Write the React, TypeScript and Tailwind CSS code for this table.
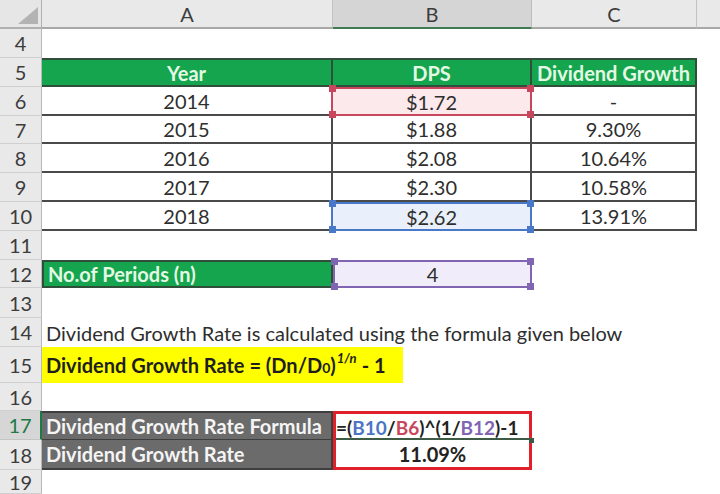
import React from "react";

function RH({ n, sel }: { n: number; sel?: boolean }) {
  return (
    <div
      className={
        sel
          ? "w-[42px] shrink-0 flex items-center justify-center bg-[#d6d6d6] border-r-2 border-r-[#1e7a45] border-b border-b-[#c4c4c4] text-[#1e7a45] text-[20px]"
          : "w-[42px] shrink-0 flex items-center justify-center bg-[#e9e9e9] border-r border-r-[#b8b8b8] border-b border-b-[#cfcfcf] text-[#3c3c3c] text-[20px]"
      }
    >
      {n}
    </div>
  );
}

function Handles({ color }: { color: string }) {
  return (
    <>
      <span className={`absolute -left-[4px] -top-[4px] w-[7px] h-[7px] ${color}`} />
      <span className={`absolute -left-[4px] -bottom-[4px] w-[7px] h-[7px] ${color}`} />
      <span className={`absolute -right-[4px] -top-[4px] w-[7px] h-[7px] ${color}`} />
      <span className={`absolute -right-[4px] -bottom-[4px] w-[7px] h-[7px] ${color}`} />
    </>
  );
}

const DataRow = ({
  n,
  h,
  year,
  dps,
  growth,
  sel,
}: {
  n: number;
  h: string;
  year: string;
  dps: string;
  growth: string;
  sel?: "red" | "blue";
}) => (
  <div className={`flex ${h}`}>
    <RH n={n} />
    <div className="w-[291px] shrink-0 flex items-center justify-center border-b-2 border-r-2 border-[#4a4a4a] text-[#2e2e2e]">
      {year}
    </div>
    {sel === "red" ? (
      <div className="relative shrink-0 flex items-center justify-center bg-[#fce9ec] border-2 border-[#c9475c] -ml-[2px] w-[201px] text-[#2e2e2e]">
        {dps}
        <Handles color="bg-[#c9475c]" />
      </div>
    ) : sel === "blue" ? (
      <div className="relative shrink-0 flex items-center justify-center bg-[#e9f0fb] border-2 border-[#4a78c8] -ml-[2px] w-[201px] text-[#2e2e2e]">
        {dps}
        <Handles color="bg-[#4a78c8]" />
      </div>
    ) : (
      <div className="w-[199px] shrink-0 flex items-center justify-center border-b-2 border-r-2 border-[#4a4a4a] text-[#2e2e2e]">
        {dps}
      </div>
    )}
    <div className="w-[165px] shrink-0 flex items-center justify-center border-b-2 border-r-2 border-[#4a4a4a] text-[#2e2e2e]">
      {growth}
    </div>
    <div className="flex-1" />
  </div>
);

export default function App() {
  return (
    <div className="w-[720px] h-[494px] overflow-hidden bg-white font-['Lato',sans-serif] text-[20px] leading-none">
      {/* column headers */}
      <div className="flex h-[29px]">
        <div className="relative w-[42px] shrink-0 bg-[#e6e6e6] border-r border-b-2 border-[#b0b0b0]">
          <svg className="absolute right-[3px] bottom-[3px]" width="20" height="17" viewBox="0 0 20 17">
            <polygon points="20,0 20,17 0,17" fill="#b3b3b3" />
          </svg>
        </div>
        <div className="w-[291px] shrink-0 flex items-center justify-center bg-[#e9e9e9] border-r border-r-[#c2c2c2] border-b-2 border-b-[#a8a8a8] text-[#3c3c3c] text-[20px]">
          A
        </div>
        <div className="w-[199px] shrink-0 flex items-center justify-center bg-[#d5d5d5] border-r border-r-[#bcbcbc] border-b-2 border-b-[#3f7a55] text-[#3c3c3c] text-[20px]">
          B
        </div>
        <div className="w-[165px] shrink-0 flex items-center justify-center bg-[#e9e9e9] border-r border-r-[#c2c2c2] border-b-2 border-b-[#a8a8a8] text-[#3c3c3c] text-[20px]">
          C
        </div>
        <div className="flex-1 bg-[#e9e9e9] border-b-2 border-b-[#a8a8a8]" />
      </div>

      {/* row 4 */}
      <div className="flex h-[29px]">
        <RH n={4} />
        <div className="flex-1" />
      </div>

      {/* row 5 header */}
      <div className="flex h-[29px]">
        <RH n={5} />
        <div className="w-[291px] shrink-0 flex items-center justify-center bg-[#14a54e] border-y-2 border-r-2 border-[#2f4f3a] text-[#e4f9e4] font-bold">
          Year
        </div>
        <div className="w-[199px] shrink-0 flex items-center justify-center bg-[#14a54e] border-y-2 border-r-2 border-[#2f4f3a] text-[#e4f9e4] font-bold">
          DPS
        </div>
        <div className="w-[165px] shrink-0 flex items-center justify-center bg-[#14a54e] border-y-2 border-r-2 border-[#2f4f3a] text-[#e4f9e4] font-bold whitespace-nowrap">
          Dividend Growth
        </div>
        <div className="flex-1" />
      </div>

      <DataRow n={6} h="h-[29px]" year="2014" dps="$1.72" growth="-" sel="red" />
      <DataRow n={7} h="h-[28px]" year="2015" dps="$1.88" growth="9.30%" />
      <DataRow n={8} h="h-[29px]" year="2016" dps="$2.08" growth="10.64%" />
      <DataRow n={9} h="h-[29px]" year="2017" dps="$2.30" growth="10.58%" />
      <DataRow n={10} h="h-[29px]" year="2018" dps="$2.62" growth="13.91%" sel="blue" />

      {/* row 11 */}
      <div className="flex h-[29px]">
        <RH n={11} />
        <div className="flex-1" />
      </div>

      {/* row 12 */}
      <div className="flex h-[28px]">
        <RH n={12} />
        <div className="w-[291px] shrink-0 flex items-center pl-[4px] bg-[#14a54e] border-2 border-[#2f4f3a] text-[#e4f9e4] font-bold">
          No.of Periods (n)
        </div>
        <div className="relative w-[199px] shrink-0 flex items-center justify-center bg-[#f0ecf9] border-2 border-[#8065b3] text-[#2e2e2e]">
          4
          <Handles color="bg-[#8065b3]" />
        </div>
        <div className="flex-1" />
      </div>

      {/* row 13 */}
      <div className="flex h-[30px]">
        <RH n={13} />
        <div className="flex-1" />
      </div>

      {/* row 14 */}
      <div className="flex h-[29px]">
        <RH n={14} />
        <div className="flex-1 flex items-center pl-[4px] text-[#2e2e2e] whitespace-nowrap">
          Dividend Growth Rate is calculated using the formula given below
        </div>
      </div>

      {/* row 15 */}
      <div className="flex h-[36px]">
        <RH n={15} />
        <div className="w-[361px] shrink-0 flex items-center pl-[4px] bg-[#ffff00] text-[#1e1e1e] font-bold whitespace-nowrap">
          Dividend Growth Rate = (Dn/D<sub className="text-[14px] relative top-[3px]">0</sub>)
          <sup className="text-[13px] italic relative -top-[7px] ml-[1px]">1/n</sup>
          <span className="ml-[5px]">- 1</span>
        </div>
        <div className="flex-1" />
      </div>

      {/* row 16 */}
      <div className="flex h-[28px]">
        <RH n={16} />
        <div className="flex-1" />
      </div>

      {/* row 17 */}
      <div className="flex h-[29px]">
        <RH n={17} sel />
        <div className="w-[291px] shrink-0 flex items-center pl-[4px] bg-[#6b6b6b] border-t-2 border-r-2 border-b border-[#3e3e3e] text-[#f4f4f4] font-bold whitespace-nowrap">
          Dividend Growth Rate Formula
        </div>
        <div className="relative w-[199px] shrink-0 flex items-center justify-start border-t-[3px] border-x-[3px] border-[#e0202a] text-[#222] text-[19px] font-bold whitespace-nowrap">
          <div className="absolute left-0 right-0 bottom-0 h-[2px] bg-[#3d5a45]" />
          <span className="absolute -right-[5px] -bottom-[3px] w-[5px] h-[5px] bg-[#3d5a45]" />
          <span>=(</span>
          <span className="text-[#4a74c4]">B10</span>
          <span>/</span>
          <span className="text-[#c9475c]">B6</span>
          <span>)^(1/</span>
          <span className="text-[#8065b3]">B12</span>
          <span>)-1</span>
        </div>
        <div className="flex-1" />
      </div>

      {/* row 18 */}
      <div className="flex h-[30px]">
        <RH n={18} />
        <div className="w-[291px] shrink-0 flex items-center pl-[4px] bg-[#6b6b6b] border-b-2 border-r-2 border-[#3e3e3e] text-[#f4f4f4] font-bold">
          Dividend Growth Rate
        </div>
        <div className="w-[199px] shrink-0 flex items-center justify-center border-b-[3px] border-x-[3px] border-[#e0202a] text-[#222] font-bold">
          11.09%
        </div>
        <div className="flex-1" />
      </div>

      {/* row 19 */}
      <div className="flex h-[24px]">
        <RH n={19} />
        <div className="flex-1" />
      </div>
    </div>
  );
}
